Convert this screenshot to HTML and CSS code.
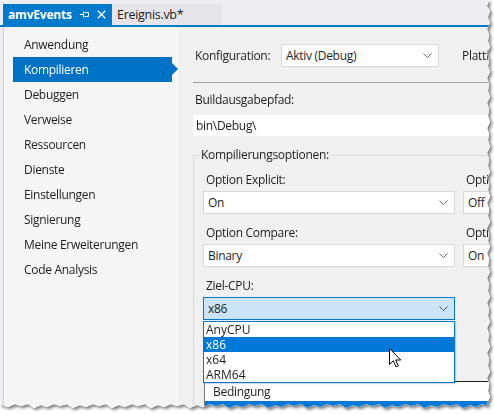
FILE: index.html
```html
<!DOCTYPE html>
<html lang="de">
<head>
<meta charset="utf-8">
<title>amvEvents</title>
<link rel="stylesheet" href="styles.css">
</head>
<body>
<div class="paper">
  <div class="window">
    <div class="tabbar">
      <div class="tab tab-active">
        <span class="tab-title">amvEvents</span>
        <svg class="pin" width="9" height="7" viewBox="0 0 9 7"><path d="M0 3.5H3.5M3.5 0.5V6.5M4.5 1.5H8.5V5.5H4.5" fill="none" stroke="#fff" stroke-width="1"/></svg>
        <svg class="close" width="9" height="9" viewBox="0 0 9 9"><path d="M0.8 0.8L8.2 8.2M8.2 0.8L0.8 8.2" fill="none" stroke="#fff" stroke-width="1.3"/></svg>
      </div>
      <div class="tab tab-inactive">Ereignis.vb*</div>
    </div>
    <div class="content">
      <nav class="nav">
        <div class="nav-item">Anwendung</div>
        <div class="nav-item nav-selected">Kompilieren</div>
        <div class="nav-item">Debuggen</div>
        <div class="nav-item">Verweise</div>
        <div class="nav-item">Ressourcen</div>
        <div class="nav-item">Dienste</div>
        <div class="nav-item">Einstellungen</div>
        <div class="nav-item">Signierung</div>
        <div class="nav-item">Meine Erweiterungen</div>
        <div class="nav-item">Code Analysis</div>
      </nav>
      <main class="main">
        <div class="config-row">
          <span class="config-label">Konfiguration:</span>
          <div class="combo combo-config"><span>Aktiv (Debug)</span><svg class="chev" width="9" height="5" viewBox="0 0 9 5"><path d="M0.5 0.5L4.5 4.5L8.5 0.5" fill="none" stroke="#6d6d6d" stroke-width="1"/></svg></div>
          <span class="platform-label">Plattform:</span>
        </div>
        <div class="separator"></div>
        <div class="field-label">Buildausgabepfad:</div>
        <div class="textbox">bin\Debug\</div>
        <fieldset class="group">
          <legend class="group-legend">Kompilierungsoptionen:</legend>
          <div class="grid">
            <div class="cell">
              <div class="opt-label first">Option Explicit:</div>
              <div class="combo"><span>On</span><svg class="chev" width="9" height="5" viewBox="0 0 9 5"><path d="M0.5 0.5L4.5 4.5L8.5 0.5" fill="none" stroke="#6d6d6d" stroke-width="1"/></svg></div>
            </div>
            <div class="cell">
              <div class="opt-label first">Option Strict:</div>
              <div class="combo"><span>Off</span><svg class="chev" width="9" height="5" viewBox="0 0 9 5"><path d="M0.5 0.5L4.5 4.5L8.5 0.5" fill="none" stroke="#6d6d6d" stroke-width="1"/></svg></div>
            </div>
            <div class="cell">
              <div class="opt-label">Option Compare:</div>
              <div class="combo"><span>Binary</span><svg class="chev" width="9" height="5" viewBox="0 0 9 5"><path d="M0.5 0.5L4.5 4.5L8.5 0.5" fill="none" stroke="#6d6d6d" stroke-width="1"/></svg></div>
            </div>
            <div class="cell">
              <div class="opt-label">Option Infer:</div>
              <div class="combo"><span>On</span><svg class="chev" width="9" height="5" viewBox="0 0 9 5"><path d="M0.5 0.5L4.5 4.5L8.5 0.5" fill="none" stroke="#6d6d6d" stroke-width="1"/></svg></div>
            </div>
            <div class="cell">
              <div class="opt-label">Ziel-CPU:</div>
              <div class="combo-wrap">
                <div class="combo combo-focus"><span>x86</span><svg class="chev" width="9" height="5" viewBox="0 0 9 5"><path d="M0.5 0.5L4.5 4.5L8.5 0.5" fill="none" stroke="#5a5a5a" stroke-width="1"/></svg></div>
                <ul class="droplist">
                  <li>AnyCPU</li>
                  <li class="drop-selected">x86</li>
                  <li>x64</li>
                  <li>ARM64</li>
                </ul>
                <svg class="cursor" width="13" height="20" viewBox="0 0 13 20"><path d="M0.5 0.5V16.5L4.3 12.8L7 18.8L9.3 17.8L6.7 12H11.7Z" fill="#fff" stroke="#000" stroke-width="1" stroke-linejoin="miter"/></svg>
              </div>
            </div>
          </div>
          <div class="conditions">
            <div class="conditions-head">Bedingung</div>
            <div class="conditions-row"></div>
          </div>
        </fieldset>
      </main>
    </div>
  </div>
</div>
</body>
</html>
```
FILE: styles.css
```css
* { box-sizing: border-box; }
html, body { margin: 0; padding: 0; background: #ffffff; }
body {
  font-family: "Open Sans", "Noto Sans", "Liberation Sans", sans-serif;
  font-size: 12px;
  letter-spacing: -0.3px;
  color: #1e1e1e;
}
.paper {
  width: 494px;
  height: 415px;
  filter: drop-shadow(2px 2px 1.5px rgba(0,0,0,0.5));
}
.window {
  width: 490px;
  height: 409px;
  display: flex;
  flex-direction: column;
  background: #eeeef2;
  overflow: hidden;
  clip-path: polygon(0 0, 489px 0, 487px 6px, 490px 11px, 488px 17px, 490px 23px, 487px 29px, 489px 35px, 488px 41px, 490px 47px, 487px 53px, 489px 60px, 488px 66px, 490px 72px, 487px 78px, 489px 84px, 488px 91px, 490px 97px, 487px 103px, 489px 109px, 488px 116px, 490px 122px, 487px 128px, 489px 134px, 488px 140px, 490px 147px, 487px 153px, 489px 159px, 488px 166px, 490px 172px, 487px 178px, 489px 184px, 488px 190px, 490px 197px, 487px 203px, 489px 209px, 488px 216px, 490px 222px, 487px 228px, 489px 234px, 488px 241px, 490px 247px, 487px 253px, 489px 259px, 488px 266px, 490px 272px, 487px 278px, 489px 284px, 488px 291px, 490px 297px, 487px 303px, 489px 309px, 488px 316px, 490px 322px, 487px 328px, 489px 334px, 488px 341px, 490px 347px, 487px 353px, 489px 359px, 488px 366px, 490px 372px, 487px 378px, 489px 384px, 488px 391px, 490px 397px, 487px 403px, 488px 406px, 482px 404px, 476px 407px, 470px 405px, 463px 408px, 457px 404px, 450px 406px, 444px 404px, 437px 407px, 431px 405px, 424px 408px, 418px 404px, 411px 406px, 405px 404px, 398px 407px, 392px 405px, 385px 408px, 379px 404px, 372px 406px, 366px 404px, 359px 407px, 353px 405px, 346px 408px, 340px 404px, 333px 406px, 327px 404px, 320px 407px, 314px 405px, 307px 408px, 301px 404px, 294px 406px, 288px 404px, 281px 407px, 275px 405px, 268px 408px, 262px 404px, 255px 406px, 249px 404px, 242px 407px, 236px 405px, 229px 408px, 223px 404px, 216px 406px, 210px 404px, 203px 407px, 197px 405px, 190px 408px, 184px 404px, 177px 406px, 171px 404px, 164px 407px, 158px 405px, 151px 408px, 145px 404px, 138px 406px, 132px 404px, 125px 407px, 119px 405px, 112px 408px, 106px 404px, 99px 406px, 93px 404px, 86px 407px, 80px 405px, 73px 408px, 67px 404px, 60px 406px, 54px 404px, 47px 407px, 41px 405px, 34px 408px, 28px 404px, 21px 406px, 15px 404px, 8px 407px, 2px 405px, 0 406px);
}

/* tabs */
.tabbar {
  flex: 0 0 27px;
  display: flex;
  align-items: flex-end;
  padding-left: 3px;
  border-bottom: 2px solid #007acc;
  background: #eeeef2;
}
.tab {
  height: 21px;
  display: flex;
  align-items: center;
  white-space: nowrap;
}
.tab-active {
  width: 109px;
  background: #007acc;
  color: #ffffff;
  padding-left: 5px;
}
.tab-title { font-weight: 700; width: 67px; letter-spacing: -0.2px; }
.pin { margin-left: 5px; }
.close { margin-left: 8px; }
.tab-inactive {
  width: 110px;
  background: #e4e4e9;
  padding-left: 5px;
  color: #1e1e1e;
  font-size: 12.5px;
}

/* body */
.content {
  flex: 1;
  display: flex;
  margin-left: 3px;
  border-left: 1px solid #cccedb;
  background: #ffffff;
  min-height: 0;
}
.nav {
  flex: 0 0 174px;
  background: #f5f5f5;
  padding-top: 5px;
}
.nav-item {
  position: relative;
  height: 25px;
  line-height: 25px;
  margin-left: 9px;
  width: 159px;
  padding-left: 11px;
  white-space: nowrap;
}
.nav-selected {
  background: #0072c6;
  color: #ffffff;
}
.nav-selected::after {
  content: "";
  position: absolute;
  right: -6px;
  top: 6px;
  border-top: 6.5px solid transparent;
  border-bottom: 6.5px solid transparent;
  border-left: 6px solid #0072c6;
}

.main {
  flex: 1;
  min-width: 0;
  background: #f0f0f0;
  padding: 17px 0 0 15px;
  overflow: hidden;
}
.config-row {
  display: flex;
  align-items: center;
  white-space: nowrap;
}
.config-label {
  flex: 0 0 88px;
  padding-left: 2px;
}
.combo {
  position: relative;
  height: 23px;
  background: #ffffff;
  border: 1px solid #d9d9d9;
  display: flex;
  align-items: center;
  padding-left: 4px;
  white-space: nowrap;
}
.combo .chev {
  position: absolute;
  right: 6px;
  top: 8px;
}
.combo-config {
  width: 158px;
  flex: 0 0 158px;
}
.platform-label { margin-left: 23px; flex: 0 0 auto; }
.separator {
  margin-top: 15px;
  height: 1px;
  background: #a0a0a0;
}
.field-label {
  margin-top: 9px;
  line-height: 16px;
  padding-left: 2px;
}
.textbox {
  margin-top: 7px;
  height: 21px;
  line-height: 21px;
  background: #ffffff;
  padding-left: 3px;
}

.group {
  margin: 11px 0 0 0;
  width: 420px;
  min-width: 420px;
  border: 1px solid #dcdcdc;
  border-right: none;
  padding: 0 0 0 6px;
}
.group-legend {
  padding: 0 1px;
  line-height: 16px;
}
.grid {
  margin-left: 3px;
  display: grid;
  grid-template-columns: 252px 252px;
  column-gap: 8px;
}
.cell { white-space: nowrap; }
.opt-label {
  line-height: 16px;
  margin-bottom: 3px;
  padding-left: 3px;
}
.opt-label.first { margin-top: 9px; }
.cell .combo { margin-bottom: 11px; }
.combo-wrap { position: relative; }
.cell .combo-focus {
  background: #cce4f7;
  border-color: #0078d7;
  margin-bottom: 0;
}
.droplist {
  position: absolute;
  z-index: 2;
  left: 0;
  top: 24px;
  width: 252px;
  margin: 0;
  padding: 0;
  list-style: none;
  background: #ffffff;
  border: 1px solid #0078d7;
  box-shadow: 1px 1px 1px rgba(0,0,0,0.15);
}
.droplist li {
  height: 15px;
  line-height: 15px;
  padding-left: 2px;
  font-size: 12px;
  letter-spacing: 0;
}
.droplist .drop-selected {
  background: #0078d7;
  color: #ffffff;
}
.cursor {
  position: absolute;
  z-index: 3;
  left: 186px;
  top: 51px;
}
.conditions {
  margin: 61px 0 0 4px;
  border-top: 1px solid #1e1e1e;
  border-left: 1px solid #7a7a7a;
  background: #ffffff;
}
.conditions-head {
  height: 19px;
  line-height: 19px;
  padding-left: 8px;
}
.conditions-row {
  height: 20px;
  background: #0078d7;
}
```
